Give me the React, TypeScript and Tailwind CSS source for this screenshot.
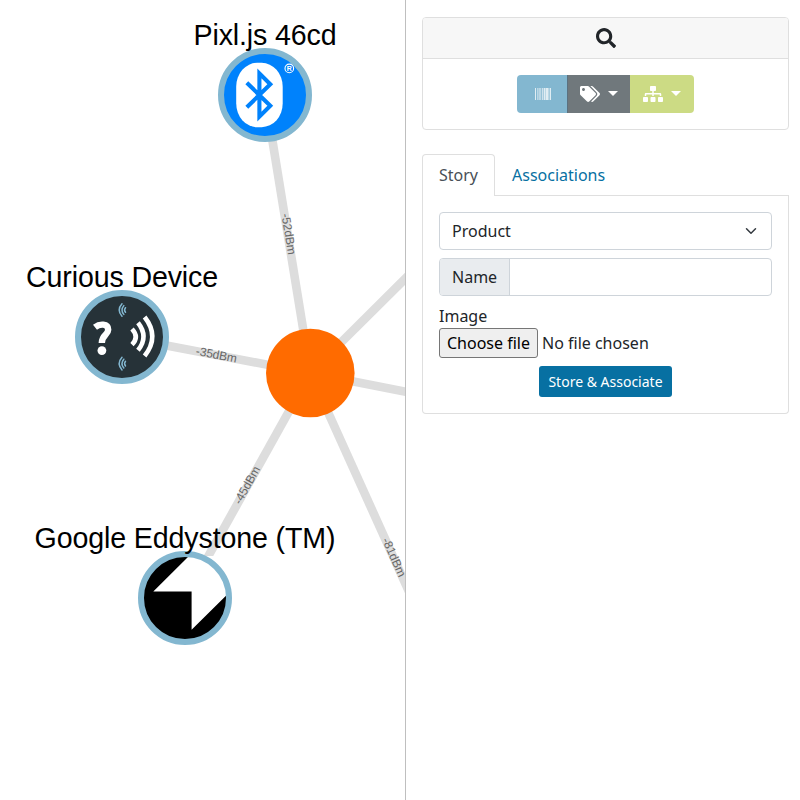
import React from "react";
import { FaSearch, FaTags, FaSitemap } from "react-icons/fa";

const HUB = { x: 310.3, y: 373 };

const edges = [
  { x: 265, y: 95 },
  { x: 122, y: 337 },
  { x: 185, y: 598 },
  { x: 425, y: 259 },
  { x: 425, y: 395.5 },
  { x: 424, y: 625 },
];

const edgeLabels = [
  { text: "-52dBm", x: 289, y: 234, angle: 80.7 },
  { text: "-35dBm", x: 216.5, y: 354.5, angle: 10.8 },
  { text: "-45dBm", x: 246.7, y: 485, angle: -60.9 },
  { text: "-81dBm", x: 394.3, y: 557, angle: 65.6 },
];

const nodeLabels = [
  { text: "Pixl.js 46cd", x: 265, y: 45 },
  { text: "Curious Device", x: 122, y: 287 },
  { text: "Google Eddystone (TM)", x: 185, y: 548 },
];

function BluetoothNode() {
  return (
    <g transform="translate(265 95)">
      <circle r="44" fill="#0082fc" stroke="#83b7d0" strokeWidth="6" />
      <rect x="-28.8" y="-32.2" width="46.5" height="64.4" rx="21" ry="24" fill="#fff" />
      <path d="M-18.2 -12.3L5.3 10.8L-5.6 21.6V-21.6L5.3 -10.8L-18.2 12.3" fill="none" stroke="#0082fc" strokeWidth="4.1" strokeMiterlimit="10" />
      <circle cx="24.3" cy="-26.6" r="4.3" fill="none" stroke="#fff" strokeWidth="1.1" />
      <text x="24.4" y="-24.1" fontSize="7" fontWeight="700" textAnchor="middle" fill="#fff">R</text>
    </g>
  );
}

function CuriousNode() {
  return (
    <g transform="translate(122 337)">
      <circle r="44" fill="#263238" stroke="#83b7d0" strokeWidth="6" />
      <path d="M-27 -9.8C-22.5 -13.4 -13.8 -13.8 -13.8 -7.3C-13.8 -2 -20.2 -2.3 -20.2 6" fill="none" stroke="#fff" strokeWidth="6.4" />
      <circle cx="-20.1" cy="13.6" r="4.4" fill="#fff" />
      <g fill="none" stroke="#fff" strokeWidth="4.6">
        <path d="M10 -8Q17.5 0 10 7.6" />
        <path d="M16 -14.3Q27 -0.5 16 13.3" />
        <path d="M22.6 -20Q38 -0.5 22.6 19" />
      </g>
      <g fill="none" stroke="#83b7d0" strokeWidth="1.5" strokeLinecap="round">
        <path d="M3.5 -29.3Q1.6 -27 3.5 -24.7M1.8 -31.4Q-1.8 -27 1.8 -22.6M0 -33.3Q-5.6 -27 0 -20.7" />
        <path d="M3.5 24.3Q1.6 26.6 3.5 28.9M1.8 22.2Q-1.8 26.6 1.8 31M0 20.3Q-5.6 26.6 0 32.9" />
      </g>
    </g>
  );
}

function EddystoneNode() {
  return (
    <g transform="translate(185 598)">
      <circle r="42.5" fill="#000" />
      <path d="M-31.7 -6.4L4 -42.1H42.5V-3.8L6.6 31.8V-6.4Z" fill="#fff" />
      <circle r="44" fill="none" stroke="#83b7d0" strokeWidth="6" />
    </g>
  );
}

function Graph() {
  return (
    <svg width="405" height="800" viewBox="0 0 405 800" className="block font-['Liberation_Sans',sans-serif]">
      <g stroke="#ddd" strokeWidth="8.6">
        {edges.map((e) => (
          <line key={`${e.x}-${e.y}`} x1={HUB.x} y1={HUB.y} x2={e.x} y2={e.y} />
        ))}
      </g>
      {edgeLabels.map((l) => (
        <text key={l.text} transform={`translate(${l.x} ${l.y}) rotate(${l.angle})`} y="4.3" fontSize="12" letterSpacing="-0.1" textAnchor="middle" fill="#666">
          {l.text}
        </text>
      ))}
      <circle cx={HUB.x} cy={HUB.y} r="44.3" fill="#ff6b00" />
      <BluetoothNode />
      <CuriousNode />
      <EddystoneNode />
      {nodeLabels.map((l) => (
        <text key={l.text} x={l.x} y={l.y} fontSize="28.6" letterSpacing="-0.13" textAnchor="middle" fill="#000">
          {l.text}
        </text>
      ))}
    </svg>
  );
}

function Barcode() {
  return (
    <svg width="16" height="12" viewBox="0 0 16 12" fill="#fff" className="opacity-75">
      <path d="M0 0h1v12H0zM2 0h.6v12H2zM3.6 0h1v12h-1zM5.4 0h.6v12h-.6zM6.8 0h1v12h-1zM8.6 0h2v12h-2zM11 0h2v12h-2zM13.4 0h.8v12h-.8zM14.8 0H16v12h-1.2z" />
    </svg>
  );
}

function Caret() {
  return <span className="mb-0.5 ml-2 h-0 w-0 border-x-[5px] border-t-[5px] border-x-transparent border-t-white" />;
}

function SearchCard() {
  return (
    <section className="overflow-hidden rounded border border-[#dfdfdf]">
      <header className="flex h-[41px] items-center justify-center border-b border-[#dfdfdf] bg-[#f7f7f7]">
        <FaSearch size={20} />
      </header>
      <div className="flex justify-center py-4">
        <div className="flex h-[38px] overflow-hidden rounded text-white">
          <button className="flex w-[50px] items-center justify-center bg-[#83b7d0] pl-0.5">
            <Barcode />
          </button>
          <button className="flex w-[63px] items-center border-l border-[#5b7180] bg-[#70787c] pl-3">
            <FaTags size={20} className="shrink-0" />
            <Caret />
          </button>
          <button className="flex w-16 items-center bg-[#ccdb84] pl-[13px]">
            <FaSitemap size={20} className="shrink-0" />
            <Caret />
          </button>
        </div>
      </div>
    </section>
  );
}

function StoryCard() {
  return (
    <section>
      <nav className="flex h-[42px]">
        <button className="w-[73px] rounded-t border border-b-0 border-[#dfdfdf] pb-px text-[#495057]">Story</button>
        <button className="flex-1 border-b border-[#dfdfdf] pl-[17px] text-left text-[#0770a2]">Associations</button>
      </nav>
      <div className="h-[218px] rounded-b border border-t-0 border-[#dfdfdf] px-4 pt-4">
        <div className="flex h-[38px] items-center justify-between rounded border border-[#ced4da] pr-3 pl-3">
          <span>Product</span>
          <svg width="16" height="12" viewBox="0 0 16 16" fill="none" stroke="#343a40" strokeWidth="2" strokeLinecap="round" strokeLinejoin="round">
            <path d="m2 5 6 6 6-6" />
          </svg>
        </div>
        <div className="mt-2 flex h-[38px] overflow-hidden rounded border border-[#ced4da]">
          <label htmlFor="name" className="flex w-[70px] items-center border-r border-[#ced4da] bg-[#e9ecef] pl-3">Name</label>
          <input id="name" className="min-w-0 flex-1 px-3 outline-none" />
        </div>
        <div className="mt-2 h-6 leading-6">Image</div>
        <div className="flex h-[30px] items-center">
          <button className="mr-1 h-[30px] w-[99px] rounded-[3px] border border-[#767676] bg-[#efefef] text-black">Choose file</button>
          <span>No file chosen</span>
        </div>
        <div className="mt-2 flex justify-center">
          <button className="h-[31px] w-[133px] rounded-[3px] bg-[#0770a2] text-sm text-white">Store &amp; Associate</button>
        </div>
      </div>
    </section>
  );
}

export default function App() {
  return (
    <main className="flex h-[800px] w-[800px] overflow-hidden bg-white font-['Noto_Sans',sans-serif] text-base text-[#212529]">
      <div className="w-[405px] shrink-0">
        <Graph />
      </div>
      <aside className="flex flex-1 flex-col gap-6 border-l border-[#bfbfbf] pt-[17px] pr-[11px] pl-4">
        <SearchCard />
        <StoryCard />
      </aside>
    </main>
  );
}
